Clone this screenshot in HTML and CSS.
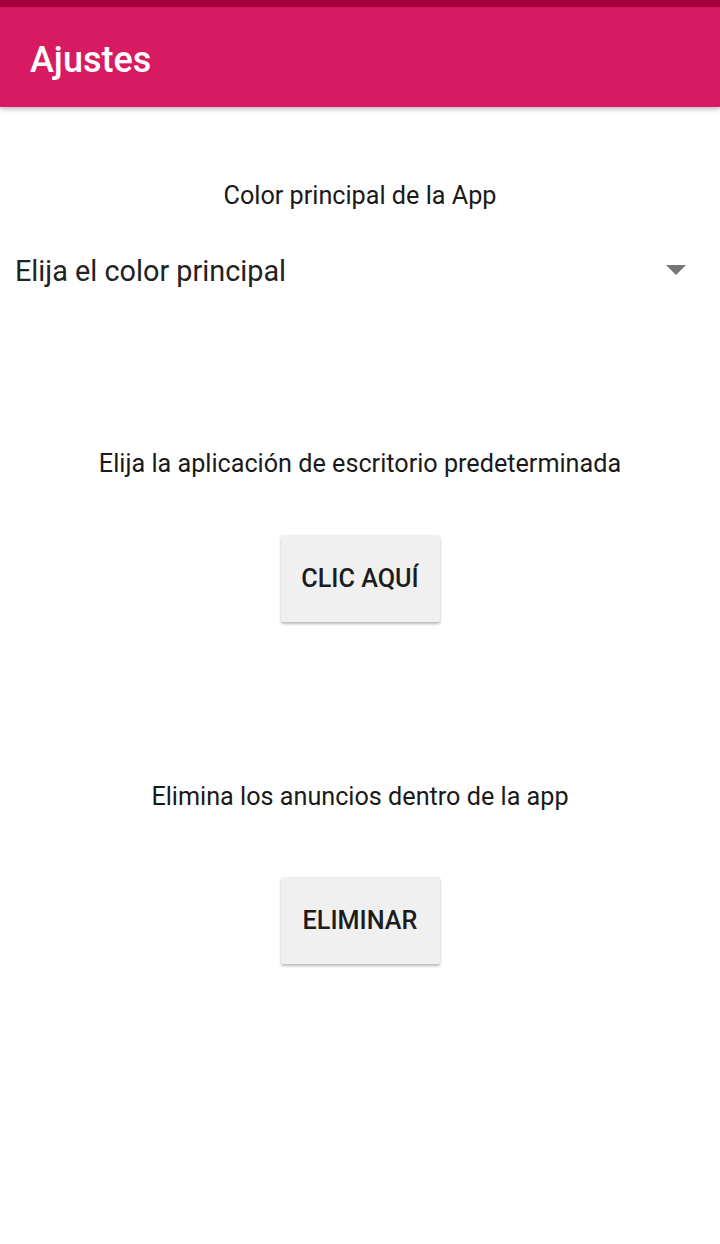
FILE: index.html
```html
<!DOCTYPE html>
<html lang="es">
<head>
<meta charset="utf-8">
<link rel="stylesheet" href="styles.css">
</head>
<body>
<div class="status"></div>
<header class="appbar"><h1 class="title">Ajustes</h1></header>
<main class="content">
  <section class="block block-color">
    <p class="label">Color principal de la App</p>
    <div class="spinner">
      <span class="spinner-text">Elija el color principal</span>
      <svg class="caret" width="20" height="10" viewBox="0 0 20 10"><path d="M0 0 H20 L10 10 Z" fill="#757575"/></svg>
    </div>
  </section>
  <section class="block block-launcher">
    <p class="label">Elija la aplicación de escritorio predeterminada</p>
    <button class="btn">CLIC AQUÍ</button>
  </section>
  <section class="block block-ads">
    <p class="label">Elimina los anuncios dentro de la app</p>
    <button class="btn btn-ads">ELIMINAR</button>
  </section>
</main>
</body>
</html>
```
FILE: styles.css
```css
html, body {
  margin: 0;
  padding: 0;
  background: #ffffff;
  font-family: Roboto, "Noto Sans", sans-serif;
  color: #1f1f1f;
}
.status {
  height: 7px;
  background: #a6003a;
}
.appbar {
  box-sizing: border-box;
  height: 100px;
  background: #d81b60;
  display: flex;
  align-items: flex-start;
  padding: 35px 30px 0;
  box-shadow: 0 2px 5px rgba(0,0,0,0.28);
  position: relative;
}
.title {
  margin: 0;
  color: #ffffff;
  font-size: 36px;
  font-weight: 500;
  line-height: 36px;
}
.content {
  display: flex;
  flex-direction: column;
  padding-bottom: 40px;
}
.block {
  display: flex;
  flex-direction: column;
  align-items: center;
}
.label {
  margin: 0;
  font-size: 25.2px;
  line-height: 30px;
  color: #1a1a1a;
  text-align: center;
}
.block-color {
  padding-top: 74px;
}
.spinner {
  align-self: stretch;
  display: flex;
  align-items: center;
  justify-content: space-between;
  padding: 0 34px 0 15px;
  margin-top: 43px;
}
.spinner-text {
  font-size: 28.8px;
  line-height: 34px;
  color: #222222;
}
.caret {
  margin-top: -3px;
}
.block-launcher {
  padding-top: 161px;
}
.block-ads {
  padding-top: 160px;
}
.btn {
  margin-top: 56px;
  width: 159px;
  height: 87px;
  border: none;
  border-radius: 2px;
  background: #f0f0f0;
  box-shadow: 0 2px 3px rgba(0,0,0,0.28);
  font-family: Roboto, sans-serif;
  font-size: 25.2px;
  font-weight: 500;
  color: #1c1c1c;
  padding: 0;
}
.btn-ads {
  margin-top: 65px;
}
```
